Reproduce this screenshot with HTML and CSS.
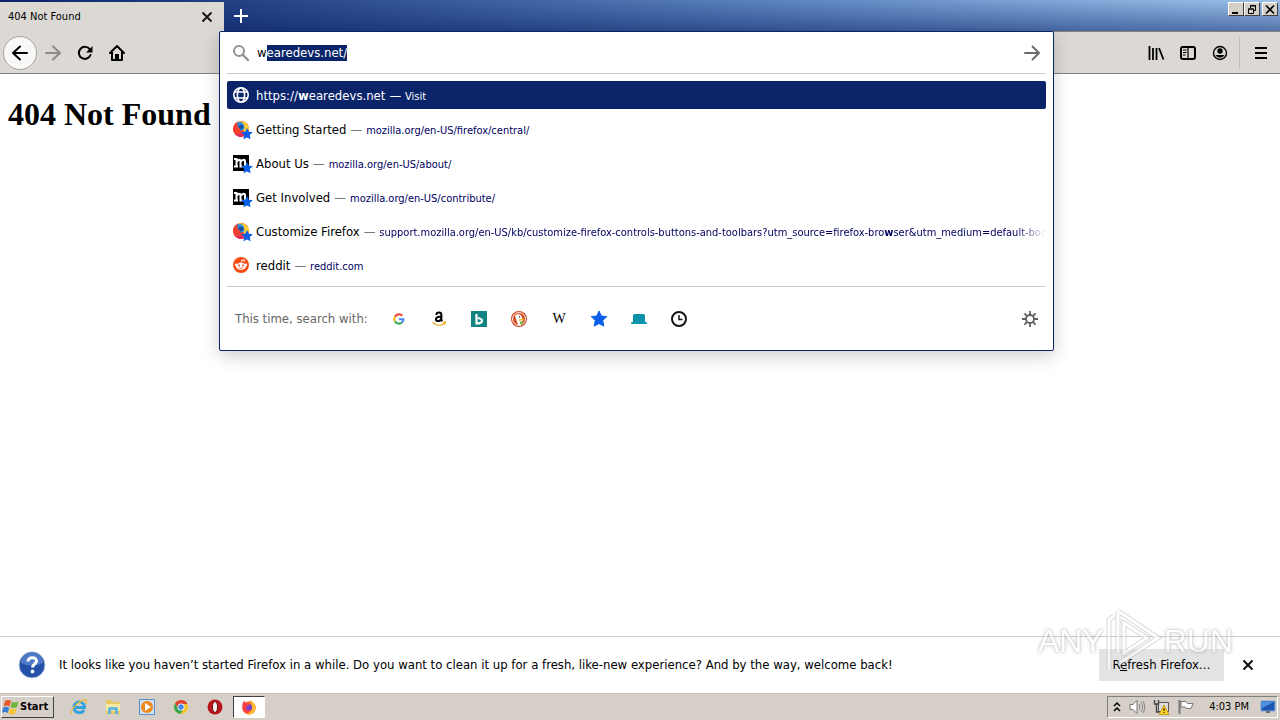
FILE: index.html
```html
<!DOCTYPE html>
<html lang="en">
<head>
<meta charset="utf-8">
<title>404 Not Found</title>
<link rel="stylesheet" href="styles.css">
</head>
<body>
<svg class="sprites" width="0" height="0" aria-hidden="true">
  <symbol id="star" viewBox="0 0 16 16"><path d="M8 0l2.300 5 5.500.6-4.100 3.800 1.100 5.700L8 12.500l-4.800 2.600 1.100-5.700L.2 5.600 5.700 5z"/></symbol>
  <symbol id="fox" viewBox="0 0 16 16"><circle cx="8" cy="8" r="8" fill="#f0382f"/><path d="M5 .6Q15-1 16 8l-3 5-4-5z" fill="#ffcf33"/><path d="M4 2Q9-1 11 4l.5 4-3.500 2-3-3z" fill="#2a8ce0"/><path d="M6 4l4 0 .5 3-3.500 1.500-1.500-2z" fill="#1d4f9c"/><path d="M0 7l2-4 2 3 3 1-1 3 4 2 3-1c-1 4-12 8-13-4z" fill="#f4412f"/><path d="M2 12q4 2 8 0l2-1q-1 5-5 5-3-1-5-4z" fill="#e02a63"/></symbol>
  <symbol id="moz" viewBox="0 0 16 16"><path d="M0 0h16v16H0z"/><path d="M1 4h2.500v7M1 11.500h4M3.500 6.500q4-3.500 4 0v5M6.500 11.500h3M7.500 6.500q4.500-3.500 4.500 0v3q0 2 3 2" fill="none" stroke="#fff" stroke-width="2"/></symbol>
</svg>

<header class="titlebar">
  <div class="tab"><span>404 Not Found</span>
    <button class="plain" aria-label="Close tab"><svg width="12" height="12" viewBox="0 0 12 12"><path d="M1.500 1.500l9 9m0-9l-9 9" stroke="#111" stroke-width="1.800"/></svg></button>
  </div>
  <button class="plain new-tab" aria-label="New tab"><svg width="16" height="16" viewBox="0 0 16 16"><path d="M8 1v14M1 8h14" stroke="#fff" stroke-width="2"/></svg></button>
  <div class="window-buttons">
    <button aria-label="Minimize"><svg width="10" height="9" viewBox="0 0 10 9"><path d="M1 7h6v2H1z"/></svg></button>
    <button aria-label="Restore"><svg width="10" height="9" viewBox="0 0 10 9"><path d="M3.500 3V.5h5v5H7M3 1h6M1.500 4v4.500h5V4H1.500M1 4h6" fill="none" stroke="#000"/></svg></button>
    <button class="close" aria-label="Close"><svg width="10" height="9" viewBox="0 0 10 9"><path d="M1 .5l8 8m0-8l-8 8" stroke="#000" stroke-width="1.600"/></svg></button>
  </div>
</header>

<nav class="toolbar">
  <div class="nav-buttons">
    <button class="plain back" aria-label="Back"><svg width="18" height="16" viewBox="0 0 18 16"><path d="M16 8H2m7-6.500L2 8l7 6.500" fill="none" stroke="#000" stroke-width="2" stroke-linecap="round" stroke-linejoin="round"/></svg></button>
    <button class="plain" aria-label="Forward"><svg width="18" height="16" viewBox="0 0 18 16"><path d="M2 8h14M9 1.500L16 8l-7 6.500" fill="none" stroke="#8d8a87" stroke-width="2" stroke-linecap="round" stroke-linejoin="round"/></svg></button>
    <button class="plain" aria-label="Reload"><svg width="16" height="16" viewBox="0 0 16 16"><path d="M12.800 4.400A6 6 0 1 0 13.500 10" fill="none" stroke="#000" stroke-width="2" stroke-linecap="round"/><path d="M15.500 1v6.500H9z"/></svg></button>
    <button class="plain" aria-label="Home"><svg width="16" height="16" viewBox="0 0 16 16"><path d="M1 8l7-7 7 7M3 7v8h10V7" fill="none" stroke="#000" stroke-width="2" stroke-linecap="round" stroke-linejoin="round"/><path d="M6 9h4v6H6z"/></svg></button>
  </div>

  <div class="urlbar">
    <div class="panel">
      <div class="entry">
        <svg width="16" height="16" viewBox="0 0 16 16"><circle cx="6" cy="6" r="5" fill="none" stroke="#929292" stroke-width="2"/><path d="M9.800 9.800L15 15" stroke="#929292" stroke-width="2.400" stroke-linecap="round"/></svg>
        <input id="address" type="text" value="wearedevs.net/" aria-label="Search or enter address" spellcheck="false" autocomplete="off">
        <button class="plain" aria-label="Go"><svg width="18" height="16" viewBox="0 0 18 16"><path d="M2 8h14M9.500 1.500L16 8l-6.500 6.500" fill="none" stroke="#6b6b6b" stroke-width="2" stroke-linecap="round" stroke-linejoin="round"/></svg></button>
      </div>
      <ul class="results">
        <li><a href="#" class="result selected"><svg class="icon" viewBox="0 0 16 16"><g fill="none" stroke="#fff" stroke-width="1.600"><circle cx="8" cy="8" r="7.200"/><ellipse cx="8" cy="8" rx="3.600" ry="7.200"/><path d="M1.500 5h13M1.500 11h13"/></g></svg><span class="title">https://<b>w</b>earedevs.net</span><span class="dash">—</span><span class="url">Visit</span></a></li>
        <li><a href="#" class="result"><span class="icon"><svg width="16" height="16"><use href="#fox"/></svg><svg class="badge"><use href="#star"/></svg></span><span class="title">Getting Started</span><span class="dash">—</span><span class="url">mozilla.org/en-US/firefox/central/</span></a></li>
        <li><a href="#" class="result"><span class="icon"><svg width="16" height="16"><use href="#moz"/></svg><svg class="badge"><use href="#star"/></svg></span><span class="title">About Us</span><span class="dash">—</span><span class="url">mozilla.org/en-US/about/</span></a></li>
        <li><a href="#" class="result"><span class="icon"><svg width="16" height="16"><use href="#moz"/></svg><svg class="badge"><use href="#star"/></svg></span><span class="title">Get Involved</span><span class="dash">—</span><span class="url">mozilla.org/en-US/contribute/</span></a></li>
        <li><a href="#" class="result"><span class="icon"><svg width="16" height="16"><use href="#fox"/></svg><svg class="badge"><use href="#star"/></svg></span><span class="title">Customize Firefox</span><span class="dash">—</span><span class="url long">support.mozilla.org/en-US/kb/customize-firefox-controls-buttons-and-toolbars?utm_source=firefox-bro<b>w</b>ser&amp;utm_medium=default-bookm</span></a></li>
        <li><a href="#" class="result"><svg class="icon" viewBox="0 0 16 16"><circle cx="8" cy="8" r="8" fill="#fb4a14"/><ellipse cx="8" cy="9.300" rx="5" ry="3.600" fill="#fff"/><circle cx="3" cy="7.800" r="1.200" fill="#fff"/><circle cx="13" cy="7.800" r="1.200" fill="#fff"/><circle cx="11" cy="3.500" r="1" fill="#fff"/><path d="M8 6l.7-3 2.300.5" fill="none" stroke="#fff" stroke-width=".8"/><circle cx="6" cy="8.600" r="1" fill="#fb4a14"/><circle cx="10" cy="8.600" r="1" fill="#fb4a14"/><path d="M6 10.800q2 1.200 4 0" fill="none" stroke="#fb4a14" stroke-width=".8"/></svg><span class="title">reddit</span><span class="dash">—</span><span class="url">reddit.com</span></a></li>
      </ul>
      <div class="engines">
        <span class="hint">This time, search with:</span>
        <div class="engine-list">
          <button class="plain" aria-label="Google"><svg width="14" height="14" viewBox="0 0 16 16"><g fill="none" stroke-width="2.400"><path d="M3.300 5.400A5.300 5.300 0 0 1 11.800 4.300" stroke="#ea4335"/><path d="M3.300 5.400a5.300 5.300 0 0 0 0 5.200" stroke="#fbbc05"/><path d="M3.300 10.600a5.300 5.300 0 0 0 8 1.400" stroke="#34a853"/><path d="M11.300 12A5.300 5.300 0 0 0 13 8.200H8" stroke="#4285f4"/></g></svg></button>
          <button class="plain" aria-label="Amazon"><svg width="16" height="16" viewBox="0 0 16 16"><path d="M5.300 4C5.500.8 10.400.8 10.400 4v5l.8 1.200M10.200 5.500C3.500 5.500 4 10.300 7.300 10.100c2-.2 3-1.800 3-3.100" fill="none" stroke="#000" stroke-width="2"/><path d="M1.500 11.500c4 3.500 9 3.500 12.200.8M12 11.200l2.500-.2-.5 2.500" fill="none" stroke="#f5a623" stroke-width="1.200"/></svg></button>
          <button class="plain" aria-label="Bing"><svg width="16" height="16" viewBox="0 0 16 16"><path d="M0 0h16v16H0z" fill="#138484"/><path d="M5.500 3v9.500q5 0 5.500-2.500.3-2-4-3" fill="none" stroke="#fff" stroke-width="2.200"/></svg></button>
          <button class="plain" aria-label="DuckDuckGo"><svg width="16" height="16" viewBox="0 0 16 16"><circle cx="8" cy="8" r="8" fill="#d1491d"/><circle cx="8" cy="8" r="6.400" fill="none" stroke="#fff"/><path d="M4 5c2-3 7-2 7 2l1 3-3 1 1 3H7z" fill="#fff"/><path d="M8 8.500l4.500-1V9l-4.500 1z" fill="#fdbb1e"/><path d="M9 11l3-.5v3l-3-.5z" fill="#67bd47"/><circle cx="8.500" cy="5.800" r=".7" fill="#333"/></svg></button>
          <button class="plain wiki" aria-label="Wikipedia">W</button>
          <button class="plain" aria-label="Bookmarks"><svg width="16" height="16" fill="#0b5ee8" stroke="#0b5ee8" stroke-linejoin="round"><use href="#star"/></svg></button>
          <button class="plain" aria-label="Tabs"><svg width="16" height="16" viewBox="0 0 16 16"><path d="M2 11V4.500Q2.200 3 3.500 3h9q1.300 0 1.500 1.500V11h1q1 0 1 1t-1 1H1q-1 0-1-1t1-1z" fill="#0994ab"/></svg></button>
          <button class="plain" aria-label="History"><svg width="16" height="16" viewBox="0 0 16 16"><circle cx="8" cy="8" r="7" fill="none" stroke="#151515" stroke-width="2"/><path d="M8 4v4.500h3.500" fill="none" stroke="#151515" stroke-width="1.500"/></svg></button>
        </div>
        <button class="plain" aria-label="Search settings"><svg width="16" height="16" viewBox="0 0 16 16"><g fill="none" stroke="#606060" stroke-width="1.800"><circle cx="8" cy="8" r="4"/><path d="M8 0v4M8 12v4M0 8h4M12 8h4M2.400 2.400l2.800 2.800M10.800 10.800l2.800 2.800M13.600 2.400l-2.800 2.800M5.200 10.800l-2.800 2.800"/></g></svg></button>
      </div>
    </div>
  </div>

  <div class="tools">
    <button class="plain" aria-label="Library"><svg width="16" height="16" viewBox="0 0 16 16"><path d="M1.500 1v14M5 3v12M8.500 3v12M11 3l4.500 11.500" stroke="#000" stroke-width="1.800"/></svg></button>
    <button class="plain" aria-label="Sidebars"><svg width="16" height="16" viewBox="0 0 16 16"><rect x="1" y="2" width="14" height="12" rx="2" fill="none" stroke="#000" stroke-width="2"/><path d="M8 2v12M3 5h3.500M3 7.500h3.500M3 10h2.500" stroke="#000" stroke-width="1.200"/></svg></button>
    <button class="plain" aria-label="Account"><svg width="16" height="16" viewBox="0 0 16 16"><circle cx="8" cy="8" r="6.500" fill="none" stroke="#000" stroke-width="1.400"/><circle cx="8" cy="6" r="2.700"/><path d="M3.500 10h9a5 5 0 0 1-9 0z"/></svg></button>
    <span class="separator"></span>
    <button class="plain" aria-label="Menu"><svg width="14" height="14" viewBox="0 0 14 14"><path d="M1 2h12M1 7h12M1 12h12" stroke="#000" stroke-width="2"/></svg></button>
  </div>
</nav>

<main class="page"><h1>404 Not Found</h1></main>

<section class="notice">
  <svg width="28" height="28" viewBox="0 0 28 28"><circle cx="14" cy="14" r="13" fill="#2450a8" stroke="#b8c6e0"/><path d="M3 12a11 11 0 0 1 22 0q-11 5-22 0z" fill="#4f79c8"/><path d="M10 10.500c0-5 8.500-5 8.500-.5 0 3-4 3-4 6.500" fill="none" stroke="#fff" stroke-width="3"/><circle cx="14.500" cy="20.500" r="1.900" fill="#fff"/></svg>
  <p>It looks like you haven’t started Firefox in a while. Do you want to clean it up for a fresh, like-new experience? And by the way, welcome back!</p>
  <button class="refresh">R<u>e</u>fresh Firefox…</button>
  <button class="plain" aria-label="Dismiss"><svg width="12" height="12" viewBox="0 0 12 12"><path d="M1.500 1.500l9 9m0-9l-9 9" stroke="#111" stroke-width="2"/></svg></button>
  <div class="watermark" aria-hidden="true"><span>ANY</span><svg width="54" height="66" viewBox="0 0 54 66"><path d="M2 62V12l5-4M11 3v42M11 3l40 27-40 26M17 15v30l23-15z" fill="none" stroke="#bdbdbd" stroke-width="5"/><path d="M2 62V12l5-4M11 3v42M11 3l40 27-40 26M17 15v30l23-15z" fill="none" stroke="#fff" stroke-width="3"/></svg><span>RUN</span></div>
</section>

<footer class="taskbar">
  <button class="start"><svg width="18" height="16" viewBox="0 0 18 16"><path d="M3 2q3-2 6 0L7.500 7.500q-3-2-6 0z" fill="#e8562a"/><path d="M10 2.500q3 2 6.500 0L15 8q-3 2-6.500 0z" fill="#72b53c"/><path d="M1.200 8.800q3-2 6 0L5.700 14q-3-2-5.700 0z" fill="#3b7fd4"/><path d="M8 9.300q3 2 6.500 0L13 14.500q-3 2-6.500 0z" fill="#f8c332"/></svg>Start</button>
  <div class="quick">
    <button class="plain" aria-label="Internet Explorer"><svg width="18" height="18" viewBox="0 0 18 18"><path d="M4 9.500h10.500C14.500 2 4 2 4 9.500c0 6 8 6.500 10 2.500" fill="none" stroke="#2fa0e0" stroke-width="2.800"/><path d="M2 16C-1 13 9 2 15 2c2 0 2 1 1 4" fill="none" stroke="#e9bd3a" stroke-width="1.300"/></svg></button>
    <button class="plain" aria-label="Explorer"><svg width="18" height="18" viewBox="0 0 18 18"><path d="M2 2h6l1 2h7v12H2z" fill="#e7c963"/><path d="M2 6h14v7H2z" fill="#f8e8a0"/><path d="M4 16v-5q0-2 2-2h6q2 0 2 2v5h-3v-4H7v4z" fill="#61b5dc"/></svg></button>
    <button class="plain" aria-label="Media Player"><svg width="18" height="18" viewBox="0 0 18 18"><path d="M1.500 1.500h15v15h-15z" fill="#cde3f5" stroke="#5f8fc0"/><circle cx="9" cy="9" r="6" fill="#f08719"/><path d="M7 5l6 4-6 4z" fill="#fff"/></svg></button>
    <button class="plain" aria-label="Chrome"><svg width="18" height="18" viewBox="0 0 18 18"><circle cx="9" cy="9" r="7" fill="#f5c52c"/><path d="M3 5.500A7 7 0 0 1 15.500 6H9L6 10.500z" fill="#df4638"/><path d="M3 5.500A7 7 0 0 0 8.500 16l3-5.500L6 10.500z" fill="#35a653"/><circle cx="9" cy="9" r="3.500" fill="#fff"/><circle cx="9" cy="9" r="2.700" fill="#4285f4"/></svg></button>
    <button class="plain" aria-label="Opera"><svg width="18" height="18" viewBox="0 0 18 18"><circle cx="9" cy="9" r="7.500" fill="#b9131c"/><ellipse cx="9" cy="9" rx="2.600" ry="5.500" fill="#eee" stroke="#6e0d13"/></svg></button>
    <button class="task" aria-label="Firefox"><svg width="16" height="16" viewBox="0 0 18 18"><circle cx="9" cy="10" r="7.500" fill="#ff6a2a"/><path d="M10 1c6 3 8 9 5 13-2 3-6 4-9 3 7-2 8-8 4-16z" fill="#ffbd2e"/><circle cx="9" cy="9.500" r="3.600" fill="#7640c8"/><path d="M1.500 9C1 5 3 3 4 2l1 3q3-1 4 2-3 0-3 3c-1 3 3 4 5 2-1 5-9 5-9.500-3z" fill="#f83e48"/></svg></button>
  </div>
  <div class="tray">
    <svg width="8" height="12" viewBox="0 0 8 12"><path d="M1 5l3-3 3 3M1 10l3-3 3 3" fill="none" stroke="#000" stroke-width="1.500"/></svg>
    <svg width="16" height="16" viewBox="0 0 16 16"><path d="M1 5.500h3l4-4v13l-4-4H1z" fill="#fff" stroke="#777"/><path d="M10 5q2 3 0 6M12 3q3.500 5 0 10M14 2q3.500 6 0 12" fill="none" stroke="#888"/></svg>
    <svg width="16" height="16" viewBox="0 0 16 16"><path d="M5.500 3.500h10v9h-10z" fill="#ddd" stroke="#555"/><path d="M1.500 1v4h4V1M3.500 5v8h3" fill="none" stroke="#444" stroke-width="1.400"/><path d="M11 6l5 9.500H6z" fill="#ffd52a" stroke="#b58a00" stroke-width=".7"/><path d="M10.500 9h1v3h-1zm0 4h1v1h-1z"/></svg>
    <svg width="18" height="16" viewBox="0 0 18 16"><path d="M2.500 1v14" stroke="#777" stroke-width="2"/><path d="M4 2.500h5l1.500 2H16l-2 5H9.500l-1-1.500H4z" fill="#fff" stroke="#777"/></svg>
    <time>4:03 PM</time>
    <svg width="16" height="14" viewBox="0 0 16 14"><path d="M1 1h14v10H1z" fill="#1c56b0" stroke="#79a9e0"/><path d="M2 2h12L2 8z" fill="#4f8ee0"/><path d="M6 11h4v2H6z" fill="#667"/></svg>
  </div>
</footer>
<script src="script.js"></script>
</body>
</html>
```

FILE: styles.css
```css
* { box-sizing: border-box; }

body {
  margin: 0;
  min-height: 100vh;
  display: flex;
  flex-direction: column;
  background: #fff;
  color: #000;
  font: 13px/16px "DejaVu Sans Condensed", "DejaVu Sans", sans-serif;
  font-stretch: condensed;
}

button, input { font: inherit; color: inherit; }

svg { display: block; flex: none; overflow: visible; }

.sprites { position: absolute; }

.plain {
  padding: 0;
  border: 0;
  background: none;
  display: grid;
  place-items: center;
}

/* Title bar */
.titlebar {
  display: flex;
  height: 32px;
  padding-top: 2px;
  border-bottom: 1px solid #85817d;
  background:
    linear-gradient(rgba(10, 36, 106, 0), rgba(10, 36, 106, 0.5)),
    linear-gradient(90deg, #0a246a, #5c84bf 60%, #9cc2ea);
}

.tab {
  width: 224px;
  margin-bottom: -1px;
  padding: 0 11px 0 8px;
  display: flex;
  align-items: center;
  justify-content: space-between;
  background: #dcd8d4;
  font-size: 11px;
}

.new-tab { width: 33px; height: 28px; }

.window-buttons {
  margin-left: auto;
  padding-right: 2px;
  display: flex;
}

.window-buttons button {
  width: 16px;
  height: 14px;
  padding: 0;
  display: grid;
  place-items: center;
  border: 1px solid;
  border-color: #fff #404040 #404040 #fff;
  background: #d4d0c8;
}

.window-buttons .close { margin-left: 2px; }

/* Toolbar */
.toolbar {
  display: flex;
  height: 42px;
  border-bottom: 1px solid #85817d;
  background: #dcd8d4;
}

.nav-buttons, .tools { display: flex; align-items: center; }

.nav-buttons { width: 219px; padding-left: 3px; }
.nav-buttons button { width: 32px; height: 32px; }

.nav-buttons .back {
  width: 34px;
  height: 34px;
  border: 1px solid #a5a29e;
  border-radius: 50%;
  background: #f8f8f7;
}

.tools { width: 226px; padding-right: 3px; justify-content: flex-end; }
.tools button { width: 32px; height: 32px; }
.separator { width: 1px; height: 32px; margin: 0 5px 0 3px; background: #c0bcb8; }

.urlbar { flex: 1; position: relative; min-width: 0; }

.panel {
  position: absolute;
  z-index: 2;
  inset: -1px 0 auto;
  padding: 0 7px;
  border: 1px solid #0a246a;
  border-radius: 2px;
  background: #fff;
  box-shadow: 0 5px 18px rgba(0, 0, 0, 0.2);
}

.entry {
  height: 42px;
  display: flex;
  align-items: center;
  gap: 8px;
  padding: 0 5px 0 6px;
  border-bottom: 1px solid #ccc;
}

.entry input {
  flex: 1;
  min-width: 0;
  padding: 0;
  border: 0;
  outline: 0;
  background: none;
  caret-color: transparent;
}

.entry input::selection { background: #0a246a; color: #fff; }

.results {
  margin: 0;
  padding: 7px 0;
  list-style: none;
  display: flex;
  flex-direction: column;
  gap: 6px;
  border-bottom: 1px solid #ccc;
}

.result {
  display: flex;
  align-items: center;
  height: 28px;
  padding-left: 6px;
  border-radius: 2px;
  color: #000;
  text-decoration: none;
  white-space: nowrap;
}

.icon { width: 16px; height: 16px; margin-right: 7px; flex: none; position: relative; }

.badge {
  position: absolute;
  right: -4px;
  bottom: -3px;
  width: 12px;
  height: 12px;
  fill: #0b5ee8;
}

.title, .dash { padding-top: 2px; }
.dash { margin: 0 4px; color: #777; }
.url { padding-top: 4px; color: #00005f; font-size: 11px; }

.long {
  flex: 1;
  min-width: 0;
  overflow: hidden;
  mask-image: linear-gradient(90deg, #000 calc(100% - 30px), transparent);
}

.selected { background: #0a246a; }
.selected span { color: #fff; }

.engines {
  height: 63px;
  display: flex;
  align-items: center;
  padding: 0 8px;
}

.hint { width: 144px; color: #666; white-space: nowrap; }
.engine-list { display: flex; flex: 1; }
.engine-list button { width: 40px; height: 32px; }
.engine-list .wiki { font: 14px/16px "Liberation Serif", serif; }

/* Page */
.page { flex: 1; padding: 0 8px; }

.page h1 {
  margin: 22px 0;
  font: bold 32px/37px "Liberation Serif", serif;
}

/* Notification */
.notice {
  position: relative;
  height: 57px;
  display: flex;
  align-items: center;
  padding: 0 26px 0 18px;
  border-top: 1px solid #ccc;
}

.notice p { flex: 1; margin: 0 13px; white-space: nowrap; }

.refresh {
  width: 125px;
  height: 32px;
  margin-right: 18px;
  padding: 0;
  border: 0;
  background: #e3e3e3;
}

.watermark {
  position: absolute;
  right: 47px;
  top: -29px;
  display: flex;
  align-items: center;
  gap: 3px;
  opacity: 0.6;
  color: #fff;
  font: 32px/66px "Liberation Sans", sans-serif;
  text-shadow: 0 0 2px #888, 0 0 4px #aaa;
  pointer-events: none;
}

/* Taskbar */
.taskbar {
  display: flex;
  align-items: center;
  height: 27px;
  border-top: 1px solid #c5c0b9;
  background: #d6cfc7;
}

.start {
  width: 53px;
  height: 22px;
  margin-left: 1px;
  padding: 0;
  display: flex;
  align-items: center;
  border: 1px solid;
  border-color: #fff #404040 #404040 #fff;
  background: #d6cfc7;
  font-size: 11px;
  font-weight: bold;
}

.quick { display: flex; align-items: center; margin-left: 8px; }
.quick .plain { width: 34px; height: 22px; }

.task {
  width: 32px;
  height: 22px;
  margin-left: 1px;
  padding: 0;
  display: grid;
  place-items: center;
  border: 1px solid;
  border-color: #404040 #fff #fff #404040;
  background: #fff;
}

.tray {
  margin-left: auto;
  margin-right: 2px;
  height: 22px;
  padding: 0 1px 0 5px;
  display: flex;
  align-items: center;
  gap: 8px;
  border: 1px solid;
  border-color: #808080 #fff #fff #808080;
  font-size: 11px;
}

.tray time { margin: 0 3px 0 6px; }
```

FILE: script.js
```js
const address = document.getElementById("address");
address.focus();
address.setSelectionRange(1, address.value.length);
```
